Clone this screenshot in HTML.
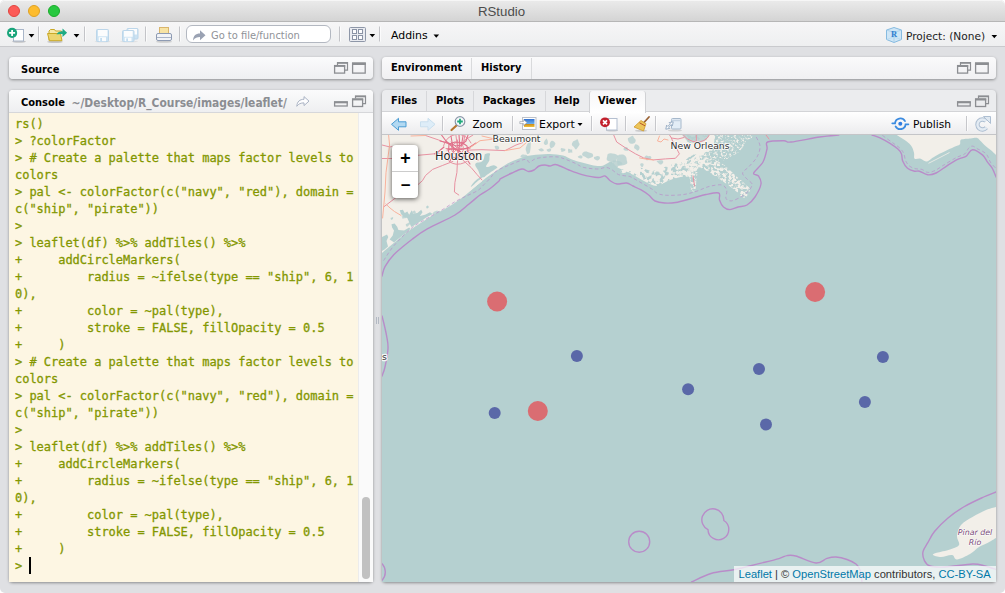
<!DOCTYPE html>
<html>
<head>
<meta charset="utf-8">
<title>RStudio</title>
<style>
html,body{margin:0;padding:0;}
html{background:#fff;}
body{width:1005px;height:593px;overflow:hidden;position:relative;border-radius:5px;background:#dfe0e3;font-family:"DejaVu Sans","Liberation Sans",sans-serif;font-size:11px;color:#000;}
.abs{position:absolute;}
#titlebar{left:0;top:0;width:1005px;height:22px;background:linear-gradient(#ebebeb,#d4d4d4);border-bottom:1px solid #b6b6b6;box-sizing:border-box;border-radius:5px 5px 0 0;box-shadow:inset 0 1px 0 #f6f6f6;}
#title{left:0;width:1003px;top:3.600px;text-align:center;font-family:"Liberation Sans",sans-serif;font-size:13.250px;color:#4c4c4c;line-height:16px;}
.tl{width:12px;height:12px;border-radius:50%;top:5px;box-sizing:border-box;}
#toolbar{left:0;top:22px;width:1005px;height:25px;background:linear-gradient(#f6f6f7,#eeeff0);border-bottom:1px solid #c9cacd;box-sizing:border-box;}
.sep{width:1px;background:#c8c9cc;top:27px;height:16px;}
.panel{background:#fff;box-sizing:border-box;border-radius:4px;box-shadow:0 1px 3px rgba(0,0,0,0.38);}
.hdr{background:linear-gradient(#fbfbfc,#eeeff1);}
.ui{font-family:"DejaVu Sans Condensed","DejaVu Sans","Liberation Sans",sans-serif;font-size:11px;line-height:14px;white-space:nowrap;}
.b{font-weight:bold;}
#console{left:9px;top:113px;width:349px;height:469px;background:#fdf6e3;}
#ctext{left:15px;top:116px;margin:0;font-family:"DejaVu Sans Mono","Liberation Mono",monospace;font-size:12px;line-height:17px;color:#839700;white-space:pre;letter-spacing:-0.024px;-webkit-text-stroke:0.3px #839700;}
</style>
</head>
<body>
<!-- title bar -->
<div id="titlebar" class="abs"></div>
<div class="abs tl" style="left:8px;background:#fc5b57;border:1px solid #e0443e;"></div>
<div class="abs tl" style="left:28px;background:#fdbc2e;border:1px solid #dea123;"></div>
<div class="abs tl" style="left:48px;background:#28c840;border:1px solid #1aab29;"></div>
<div id="title" class="abs">RStudio</div>

<!-- main toolbar -->
<div id="toolbar" class="abs"></div>
<div class="abs" style="left:186px;top:25px;width:145px;height:18px;box-sizing:border-box;border:1px solid #b3b8c1;border-radius:6px;background:#fff;"></div>
<div class="abs ui" style="left:211px;top:29px;color:#8f9298;">Go to file/function</div>
<div class="abs ui" style="left:391px;top:29px;font-family:'DejaVu Sans',sans-serif;font-size:10.900px;">Addins</div>
<div class="abs ui" style="left:906px;top:29px;font-family:'DejaVu Sans',sans-serif;font-size:10.600px;color:#222;">Project: (None)</div>
<svg class="abs" style="left:0;top:22px" width="1005" height="25" viewBox="0 22 1005 25">
<g stroke="#c3c4c8" stroke-width="1">
<path d="M38.5,26.5v15M84.5,26.5v15M145.5,26.5v15M179.5,26.5v15M339.5,26.5v15M379.5,26.5v15"/>
</g>
<g stroke="#fff" stroke-opacity="0.7" stroke-width="1">
<path d="M39.5,26.5v15M85.5,26.5v15M146.5,26.5v15M180.5,26.5v15M340.5,26.5v15M380.5,26.5v15"/>
</g>
<!-- new file -->
<ellipse cx="19" cy="41.6" rx="7" ry="1.2" fill="#000" opacity="0.18"/>
<rect x="13.5" y="29.5" width="10" height="11.5" fill="#fff" stroke="#a9b6c9" stroke-width="1"/>
<circle cx="12.1" cy="32.9" r="5.1" fill="#1aa57b"/>
<path d="M12.1,29.9v6M9.1,32.9h6" stroke="#fff" stroke-width="1.8"/>
<path d="M28.6,34l5.8,0l-2.9,3.4z" fill="#000"/>
<!-- open folder -->
<ellipse cx="55" cy="41.8" rx="8" ry="1.2" fill="#000" opacity="0.18"/>
<path d="M49,40.5l0,-9.5l1.5,-1.5l4,0l1,1.5l6,0l0,2" fill="#f7e9a8" stroke="#c9a928" stroke-width="1"/>
<path d="M47.5,33.5l13,0l1.5,7.2l-12.5,0z" fill="#ecd56f" stroke="#c9a928" stroke-width="1" stroke-linejoin="round"/>
<path d="M56.5,34.5c1,-2.5 3,-3.2 6,-3.2l0,-2.8l4.6,4.2l-4.6,4.2l0,-2.8c-2.5,0 -4.5,0.4 -6,0.4z" fill="#1eab84"/>
<path d="M73.6,34l5.8,0l-2.9,3.4z" fill="#000"/>
<!-- save (disabled) -->
<ellipse cx="102.500" cy="41.600" rx="8" ry="1" fill="#000" opacity="0.060"/>
<ellipse cx="129" cy="41.600" rx="9" ry="1" fill="#000" opacity="0.060"/>
<g>
<rect x="96.500" y="29.500" width="12" height="12" rx="1" fill="#cbe2f2" stroke="#bcd6ea"/>
<rect x="98" y="30" width="9.500" height="6.300" fill="#fbfcfd"/>
<rect x="98.700" y="37.200" width="7.300" height="4" fill="#fbfcfd"/>
<rect x="100.200" y="38" width="1.800" height="3.200" fill="#c3ddf0"/>
<rect x="127" y="28.500" width="11" height="10.500" rx="1" fill="#cbe2f2" stroke="#bcd6ea"/>
<rect x="128.500" y="29" width="8.500" height="5.500" fill="#fbfcfd"/>
<rect x="122.500" y="30.500" width="11.500" height="11" rx="1" fill="#cbe2f2" stroke="#bcd6ea"/>
<rect x="124" y="31" width="8.700" height="5.800" fill="#fbfcfd"/>
<rect x="124.700" y="37.600" width="6.800" height="3.600" fill="#fbfcfd"/>
<rect x="126.200" y="38.400" width="1.800" height="2.800" fill="#c3ddf0"/>
</g>
<!-- printer -->
<ellipse cx="164" cy="41.800" rx="8" ry="1" fill="#000" opacity="0.15"/>
<rect x="159.500" y="27.500" width="9" height="7" fill="#f7e3a4" stroke="#d9b56c"/>
<rect x="156.500" y="33.500" width="15" height="7" rx="1.500" fill="#f1f3f7" stroke="#8e9bb3"/>
<path d="M157,37.500h14" stroke="#aab4c7"/>
<!-- goto arrow -->
<path d="M193,40.500c0.300,-4.500 2.500,-7 7,-7l0,-3.300l5.500,5l-5.500,5l0,-3.300c-3,0 -5,0.800 -7,3.600z" fill="#9aa2b3"/>
<!-- grid -->
<rect x="349.500" y="27.500" width="16" height="14" rx="1" fill="#e9ebf0" stroke="#8e97a8"/>
<g fill="#fdfdfe" stroke="#8a93a5" stroke-width="1"><rect x="352.500" y="29.500" width="4" height="4"/><rect x="358.500" y="29.500" width="4" height="4"/><rect x="352.500" y="35.500" width="4" height="4"/><rect x="358.500" y="35.500" width="4" height="4"/></g>
<path d="M369.500,34l5.600,0l-2.800,3.300z" fill="#000"/>
<path d="M433.500,34.500l5.600,0l-2.800,3.300z" fill="#000"/>
<!-- project -->
<path d="M886.500,30l7.500,-2.500l7.500,2.500l0,9.500l-7.500,3l-7.500,-3z" fill="#cfe6f6" stroke="#86bbe0" stroke-width="1" stroke-linejoin="round"/>
<path d="M886.500,30l7.500,2.500l7.500,-2.500M894,32.500v10" fill="none" stroke="#a3cdea" stroke-width="0.800"/>
<path d="M886.500,39.500l7.500,-2.500l7.500,2.500" fill="none" stroke="#b5d8ef" stroke-width="0.700"/>
<text x="891" y="37.300" font-family="Liberation Serif, serif" font-weight="bold" font-size="8.500" fill="#2f7fd0">R</text>
<path d="M991.500,35l5.600,0l-2.800,3.300z" fill="#000"/>
</svg>

<!-- Source panel -->
<div class="abs panel hdr" style="left:9px;top:57px;width:364px;height:22px;"></div>
<div class="abs ui b" style="left:21px;top:63px;">Source</div>
<svg class="abs" style="left:330px;top:60px" width="40" height="16" viewBox="330 60 40 16" fill="none" stroke="#8c8e92" stroke-width="1.300">
<path d="M337.500,65v-2.300h10v7.500h-2.500" stroke-width="1.200"/><path d="M337,63h11" stroke-width="1.600"/>
<rect x="334.600" y="65.600" width="10" height="7.500"/><path d="M334,66h11.200" stroke-width="1.800"/>
<rect x="352.600" y="63.100" width="12.600" height="10"/><path d="M352,63.800h13.800" stroke-width="2.400"/>
</svg>

<!-- Console panel -->
<div class="abs panel" style="left:9px;top:90px;width:364px;height:492px;"></div>
<div class="abs hdr" style="left:9px;top:90px;width:364px;height:23px;border-radius:4px 4px 0 0;border-bottom:1px solid #d6d7da;box-sizing:border-box;"></div>
<div class="abs ui b" style="left:21px;top:96px;">Console</div>
<div class="abs ui b" style="left:71.500px;top:96px;color:#8b8d92;font-size:11.900px;">~/Desktop/R_Course/images/leaflet/</div>
<svg class="abs" style="left:296px;top:93px" width="76" height="16" viewBox="296 93 76 16" fill="none" stroke="#8c8e92" stroke-width="1.300">
<path d="M296.800,106.300c0.300,-4.700 3,-7 7.200,-7l0,-2.700l5,4.500l-5,4.500l0,-2.700c-3.200,0 -5.400,0.800 -7.200,3.400z" fill="#fdfdfe" stroke="#aab3c4" stroke-width="1" stroke-linejoin="round"/>
<rect x="334.600" y="102" width="12.600" height="4" fill="none"/><path d="M334,102.300h13.800" stroke-width="2"/>
<path d="M355.500,98.500v-2.300h10v7.500h-2.500" stroke-width="1.200"/><path d="M355,96.500h11" stroke-width="1.600"/>
<rect x="352.600" y="99" width="10" height="7.500"/><path d="M352,99.500h11.200" stroke-width="1.800"/>
</svg>
<div id="console" class="abs"></div>
<pre id="ctext" class="abs">rs()
&gt; ?colorFactor
&gt; # Create a palette that maps factor levels to
colors
&gt; pal &lt;- colorFactor(c("navy", "red"), domain =
c("ship", "pirate"))
&gt;
&gt; leaflet(df) %&gt;% addTiles() %&gt;%
+     addCircleMarkers(
+         radius = ~ifelse(type == "ship", 6, 1
0),
+         color = ~pal(type),
+         stroke = FALSE, fillOpacity = 0.5
+     )
&gt; # Create a palette that maps factor levels to
colors
&gt; pal &lt;- colorFactor(c("navy", "red"), domain =
c("ship", "pirate"))
&gt;
&gt; leaflet(df) %&gt;% addTiles() %&gt;%
+     addCircleMarkers(
+         radius = ~ifelse(type == "ship", 6, 1
0),
+         color = ~pal(type),
+         stroke = FALSE, fillOpacity = 0.5
+     )
&gt; </pre>
<div class="abs" style="left:29px;top:557px;width:2px;height:17px;background:#000;"></div>
<!-- scrollbar -->
<div class="abs" style="left:358px;top:113px;width:15px;height:469px;background:#fafafa;border-left:1px solid #ececec;box-sizing:border-box;"></div>
<div class="abs" style="left:362px;top:497px;width:8px;height:82px;border-radius:4px;background:#c1c1c1;"></div>

<div class="abs" style="left:376px;top:317px;width:1px;height:7px;background:#b3b9c3;"></div><div class="abs" style="left:378px;top:317px;width:1px;height:7px;background:#b3b9c3;"></div>
<!-- Environment panel -->
<div class="abs panel" style="left:382px;top:57px;width:614px;height:22px;background:linear-gradient(#fafafb,#f0f0f2);"></div>
<div class="abs" style="left:471px;top:58px;width:1px;height:21px;background:#d9dadc;"></div>
<div class="abs" style="left:531px;top:58px;width:1px;height:21px;background:#d9dadc;"></div>
<div class="abs ui b" style="left:391px;top:61px;">Environment</div>
<div class="abs ui b" style="left:481px;top:61px;">History</div>
<svg class="abs" style="left:953px;top:60px" width="40" height="16" viewBox="953 60 40 16" fill="none" stroke="#8c8e92" stroke-width="1.300">
<path d="M960.500,65v-2.300h10v7.500h-2.500" stroke-width="1.200"/><path d="M960,63h11" stroke-width="1.600"/>
<rect x="957.600" y="65.600" width="10" height="7.500"/><path d="M957,66h11.200" stroke-width="1.800"/>
<rect x="975.600" y="63.100" width="12.600" height="10"/><path d="M975,63.800h13.800" stroke-width="2.400"/>
</svg>

<!-- Viewer panel -->
<div class="abs panel" style="left:382px;top:90px;width:614px;height:492px;background:#ebecee;"></div>
<div class="abs" style="left:426px;top:91px;width:1px;height:20px;background:#d6d7da;"></div>
<div class="abs" style="left:473px;top:91px;width:1px;height:20px;background:#d6d7da;"></div>
<div class="abs" style="left:545px;top:91px;width:1px;height:20px;background:#d6d7da;"></div>
<div class="abs ui b" style="left:391px;top:94px;">Files</div>
<div class="abs ui b" style="left:436px;top:94px;">Plots</div>
<div class="abs ui b" style="left:483px;top:94px;">Packages</div>
<div class="abs ui b" style="left:554px;top:94px;">Help</div>
<svg class="abs" style="left:953px;top:93px" width="40" height="16" viewBox="953 93 40 16" fill="none" stroke="#8c8e92" stroke-width="1.300">
<rect x="957.600" y="102" width="12.600" height="4" fill="none"/><path d="M957,102.300h13.800" stroke-width="2"/>
<path d="M978.500,98.500v-2.300h10v7.500h-2.500" stroke-width="1.200"/><path d="M978,96.500h11" stroke-width="1.600"/>
<rect x="975.600" y="99" width="10" height="7.500"/><path d="M975,99.500h11.200" stroke-width="1.800"/>
</svg>
<div class="abs" style="left:382px;top:111px;width:614px;height:24px;background:linear-gradient(#ffffff,#ececee);border-top:1px solid #d3d4d7;border-bottom:1px solid #c4c5c8;box-sizing:border-box;"></div>
<div class="abs" style="left:589px;top:91px;width:57px;height:22px;background:linear-gradient(#f7f7f8,#ffffff);border-left:1px solid #d0d1d4;border-right:1px solid #d0d1d4;border-radius:3px 3px 0 0;box-sizing:border-box;"></div>
<div class="abs ui b" style="left:598px;top:94px;">Viewer</div>
<div class="abs ui" style="left:472.500px;top:117.300px;font-family:'DejaVu Sans',sans-serif;font-size:10.400px;">Zoom</div>
<div class="abs ui" style="left:539px;top:118px;font-family:'DejaVu Sans',sans-serif;font-size:10.900px;">Export</div>
<div class="abs ui" style="left:913px;top:118px;font-family:'DejaVu Sans',sans-serif;font-size:10.650px;">Publish</div>
<svg class="abs" style="left:382px;top:112px" width="614" height="22" viewBox="382 112 614 22">
<g stroke="#c6c7cb" stroke-width="1"><path d="M442.500,116v15M512.500,116v15M591.500,116v15M625.500,116v15M655.500,116v15M966.500,116v15"/></g><g stroke="#fff" stroke-opacity="0.700" stroke-width="1"><path d="M443.500,116v15M513.500,116v15M592.500,116v15M626.500,116v15M656.500,116v15M967.500,116v15"/></g>
<!-- back arrow -->
<path d="M391.500,124.300l7,-6l0,3.500l7.500,0l0,5l-7.500,0l0,3.500z" fill="#b2d9f2" stroke="#4a9cd3" stroke-width="1" stroke-linejoin="round"/>
<path d="M435,124.300l-7,-6l0,3.500l-7.500,0l0,5l7.500,0l0,3.500z" fill="#deedf8" stroke="#c9dfee" stroke-width="1" stroke-linejoin="round"/>
<!-- zoom -->
<path d="M456.500,125.500l-5,4.500" stroke="#b5752e" stroke-width="2.200" stroke-linecap="round"/>
<circle cx="460" cy="121.500" r="4.800" fill="#f3f8fb" stroke="#8a97a8" stroke-width="1.200"/>
<path d="M460,118.700v5.600M457.200,121.500h5.600" stroke="#1fa97a" stroke-width="1.800"/>
<!-- export -->
<defs><linearGradient id="sky" x1="0" y1="0" x2="0" y2="1"><stop offset="0" stop-color="#2f6fd0"/><stop offset="0.600" stop-color="#6fb2ee"/><stop offset="0.640" stop-color="#c98a1c"/><stop offset="1" stop-color="#f0c23c"/></linearGradient></defs>
<rect x="522.500" y="117.500" width="13.500" height="12" fill="#fff" stroke="#bcc1ca" stroke-width="1"/>
<rect x="524" y="119" width="10.500" height="8" fill="url(#sky)"/>
<path d="M519.800,121.600l3.800,0l0,-1.900l3.600,2.900l-3.600,2.900l0,-1.900l-3.800,0z" fill="#fff" stroke="#7d8590" stroke-width="0.500"/>
<path d="M577.500,123l5,0l-2.500,3z" fill="#000"/>
<!-- remove -->
<ellipse cx="612" cy="130.500" rx="6" ry="1" fill="#000" opacity="0.15"/><rect x="606.500" y="118.500" width="10.500" height="11.500" fill="#fff" stroke="#b4bfd0"/>
<circle cx="605" cy="122.300" r="4.900" fill="#c2202c"/>
<path d="M603,120.300l4,4M607,120.300l-4,4" stroke="#fff" stroke-width="1.700"/>
<!-- broom -->
<path d="M649,117l-5.500,6" stroke="#9a6234" stroke-width="1.800" stroke-linecap="round"/>
<ellipse cx="641" cy="130.800" rx="6" ry="1" fill="#000" opacity="0.15"/><path d="M641,120.500l5,3.200l-2.500,7.300l-9.500,-4z" fill="#edc55a" stroke="#cf9b2c" stroke-width="0.800" stroke-linejoin="round"/><path d="M639.500,122.800l5.500,3" stroke="#b5552a" stroke-width="1"/>
<!-- popout -->
<ellipse cx="675" cy="130.500" rx="7" ry="1" fill="#000" opacity="0.12"/>
<rect x="671.500" y="118.500" width="9.500" height="10.500" rx="1" fill="#e3edf6" stroke="#a6b8cb"/>
<path d="M671.500,120.500h9.500" stroke="#c4d3e2" stroke-width="1.500"/>
<path d="M665.800,129.200l0.800,-4l1.200,1.200l2.600,-2.600l-1.200,-1.200l4,-0.800l-0.800,4l-1.200,-1.200l-2.600,2.600l1.200,1.200z" fill="#fff" stroke="#8fa6c0" stroke-width="0.900" stroke-linejoin="round"/>
<!-- publish -->
<g fill="none" stroke="#3b8be0" stroke-width="1.800" stroke-linecap="round">
<path d="M892.300,123.300 L895,123.300 A5.400,5.400 0 0 1 905,121.100"/>
<path d="M908.400,124.300 L905.600,124.300 A5.400,5.400 0 0 1 895.600,126.500"/>
</g>
<circle cx="900.300" cy="123.800" r="2" fill="#2f7de1"/>
<!-- refresh -->
<path d="M986.300,127.700 A5,5 0 1 1 986,121" fill="none" stroke="#aebfd2" stroke-width="4.400"/>
<path d="M983.500,116.500l7,0l0,7z" fill="#dfe8f1" stroke="#aebfd2" stroke-width="1" stroke-linejoin="round"/>
<path d="M986.300,127.700 A5,5 0 1 1 986,121" fill="none" stroke="#e3ebf3" stroke-width="2.400"/>
</svg>
<svg id="mapsvg" class="abs" style="left:382px;top:135px;" width="614" height="447" viewBox="382 135 614 447">
<rect x="382" y="135" width="614" height="447" fill="#b5d0d0"/>
<defs>
<filter id="marsh" x="0" y="0" width="100%" height="100%" filterUnits="objectBoundingBox">
<feTurbulence type="fractalNoise" baseFrequency="0.22 0.25" numOctaves="3" seed="4" result="n"/>
<feColorMatrix in="n" type="matrix" values="0 0 0 0 0  0 0 0 0 0  0 0 0 0 0  0 0 0 7 -2.65" result="m"/>
<feComposite in="SourceGraphic" in2="m" operator="in"/>
</filter>
<filter id="marshB" x="0" y="0" width="100%" height="100%" filterUnits="objectBoundingBox">
<feTurbulence type="fractalNoise" baseFrequency="0.38 0.42" numOctaves="2" seed="9" result="n"/>
<feColorMatrix in="n" type="matrix" values="0 0 0 0 0  0 0 0 0 0  0 0 0 0 0  0 0 0 5 -2.45" result="m"/>
<feComposite in="SourceGraphic" in2="m" operator="in"/>
</filter>
<filter id="marshC" x="0" y="0" width="100%" height="100%" filterUnits="objectBoundingBox">
<feTurbulence type="fractalNoise" baseFrequency="0.34 0.38" numOctaves="2" seed="21" result="n"/>
<feColorMatrix in="n" type="matrix" values="0 0 0 0 0  0 0 0 0 0  0 0 0 0 0  0 0 0 6 -2.55" result="m"/>
<feComposite in="SourceGraphic" in2="m" operator="in"/>
</filter>
</defs>
<path fill="#f2efe9" d="M382,135 L640,135 L640,176 C638.2,175.2 633.1,172.3 629.5,171 C625.9,169.7 621.4,169.5 618.5,168 C615.6,166.5 613.9,162.8 612,162 C610.1,161.2 608.8,162.7 607,163.4 C605.2,164.1 603.6,165.7 601,166 C598.4,166.3 594.7,165.6 591.5,165 C588.3,164.4 585.2,163.5 582,162.6 C578.8,161.7 575.2,160.7 572,159.5 C568.8,158.3 566.7,156.4 563,155.5 C559.3,154.6 553.8,154.2 550,154 C546.2,153.8 543,154.2 540,154.4 C537,154.6 534.5,154.9 532,155.3 C529.5,155.7 528,155.8 524.9,156.7 C521.8,157.6 516.5,159.4 513.4,160.7 C510.2,162 508.3,163.2 506,164.5 C503.7,165.8 501.9,167.2 499.6,168.7 C497.4,170.1 494.8,171.7 492.5,173.2 C490.2,174.7 488.2,176.1 485.9,177.9 C483.6,179.7 480.8,182.1 478.5,184 C476.2,185.9 475,187 472,189.5 C469,192 464.2,196.2 460.4,199 C456.6,201.8 452.2,204.5 449,206.5 C445.8,208.5 443.7,209.5 441,211 C438.3,212.5 435.9,213.5 432.6,215.4 C429.3,217.3 424.6,220.4 421,222.7 C417.4,225 414.3,226.9 411,229.3 C407.7,231.7 404.2,234.4 401,237 C397.8,239.6 394.8,242.3 392,244.6 C389.2,246.9 386.2,249.4 384.5,250.8 C382.8,252.2 382.4,252.6 382,253 Z"/>
<path filter="url(#marsh)" fill="#f2efe9" d="M620,135 C634.3,129.2 691.7,131.2 706,135 C720.3,138.8 706.8,152.8 706,158 C705.2,163.2 702.7,164 701,166 C699.3,168 697.8,168.3 696,170 C694.2,171.7 692.6,174.8 690,176 C687.4,177.2 684.2,176.2 680.5,177 C676.8,177.8 671.7,179.5 667.7,181 C663.7,182.5 660.6,186 656.6,186 C652.6,186 648.5,183.2 644,181 C639.5,178.8 633.5,174.8 629.5,173 C625.5,171.2 621.6,176.3 620,170 C618.4,163.7 605.7,140.8 620,135Z"/>
<path filter="url(#marshB)" fill="#f2efe9" d="M706,135 C713.7,132.2 745.3,134 752,135 C758.7,136 747.8,138.5 746,141 C744.2,143.5 743.5,147.3 741,150 C738.5,152.7 734.3,155.2 731,157 C727.7,158.8 724.2,160.7 721,161 C717.8,161.3 714.5,160.5 712,159 C709.5,157.5 707,156 706,152 C705,148 698.3,137.8 706,135Z"/>
<path filter="url(#marshC)" fill="#f2efe9" d="M699,157 C701.2,155.8 707.8,157.7 712,159 C716.2,160.3 720.2,162.3 724,165 C727.8,167.7 731.7,172 735,175 C738.3,178 741.5,180.5 744,183 C746.5,185.5 750,187.5 750,190 C750,192.5 746.2,197.7 744,198 C741.8,198.3 739.7,194.2 737,192 C734.3,189.8 731.2,187.3 728,185 C724.8,182.7 721.5,180.3 718,178 C714.5,175.7 710.2,173 707,171 C703.8,169 700.3,168.3 699,166 C697.7,163.7 696.8,158.2 699,157Z"/>
<path filter="url(#marshC)" fill="#f2efe9" d="M687,164 C689,163.3 695.4,164.3 697,167 C698.6,169.7 696.8,176 696.5,180 C696.2,184 695.9,189.3 695,191 C694.1,192.7 691.8,192 691,190 C690.2,188 691,182.2 690,179 C689,175.8 685.5,173.5 685,171 C684.5,168.5 685,164.7 687,164Z"/>
<path fill="#f2efe9" d="M620,135 C630.3,130.5 670.7,133.8 682,135 C693.3,136.2 685.3,140.6 688,142 C690.7,143.4 695,143.8 698,143.5 C701,143.2 704.2,141.4 706,140 C707.8,138.6 707.7,135.8 709,135 C710.3,134.2 713.3,133.2 714,135 C714.7,136.8 714.7,143 713,146 C711.3,149 707.5,151.5 704,153 C700.5,154.5 695.3,153.7 692,155 C688.7,156.3 687.3,159.5 684,161 C680.7,162.5 676,162.7 672,164 C668,165.3 664,168 660,169 C656,170 652.3,170.7 648,170 C643.7,169.3 638.7,166.3 634,165 C629.3,163.7 622.3,167 620,162 C617.7,157 609.7,139.5 620,135Z"/>
<path fill="#f2efe9" d="M896.7,135 C897.9,135.8 901.5,137.8 903.9,139.6 C906.3,141.3 909.3,143.3 911,145.5 C912.7,147.7 913.4,150.5 914,152.7 C914.6,154.9 913.5,157.7 914.6,158.7 C915.7,159.7 918.6,158.2 920.6,158.7 C922.6,159.2 924.8,161.6 926.6,161.6 C928.4,161.6 929.5,159.8 931.3,158.7 C933.1,157.6 934.7,156.4 937.3,155 C939.9,153.6 943.7,151.8 946.9,150.3 C950.1,148.8 954.2,147.1 956.4,146.1 C958.6,145.1 959.2,145.4 960,144.3 C960.8,143.2 959.4,140.6 961.2,139.6 C963,138.6 968.1,138.7 970.7,138.4 C973.3,138.1 975.1,137.4 976.7,137.8 C978.3,138.2 978.9,139.4 980.3,140.7 C981.7,142 983.2,143.9 985,145.5 C986.8,147.1 989.2,148.7 991,150.3 C992.8,151.9 995.2,154.2 996,155 L996,135 Z"/>
<path fill="#f2efe9" d="M996,507 C994.3,507.5 989.9,508.3 986,510 C982.1,511.7 976.7,514.5 972.5,517 C968.3,519.5 963.6,521.8 961,525 C958.4,528.2 957.3,532.7 957,536 C956.7,539.3 960.2,542.8 959,545 C957.8,547.2 953.7,548.1 950,549.4 C946.3,550.7 939.5,551.9 936.7,552.8 C933.9,553.7 932.3,554.3 933,555 C933.7,555.7 937.8,557 941,557 C944.2,557 949.3,554.6 952,555 C954.7,555.4 954,559.7 957,559.5 C960,559.3 966.3,556.1 970,554 C973.7,551.9 976,548.9 979,547 C982,545.1 985.2,544.2 988,542.7 C990.8,541.2 994.7,538.8 996,538 Z"/>
<g fill="#b5d0d0" fill-opacity="0.8">
<path fill-opacity="1" d="M485.3,153.9 C486.2,153.5 489.2,153 489.9,153.5 C490.6,154 489.6,155.5 489.5,156.8 C489.4,158.1 489.7,159.6 489.1,161.1 C488.5,162.6 486.3,165.1 486.1,166.1 C485.9,167.1 486.5,167.1 487.8,167 C489.1,166.9 492.1,165.3 493.7,165.3 C495.2,165.3 496.7,166.5 497.1,167 C497.5,167.5 497.9,167.1 496.2,168.4 C494.5,169.7 489,173.3 487,174.7 C485,176.1 485.1,176.5 484.4,176.9 C483.7,177.3 483.2,177 482.7,177.3 C482.1,177.6 482.1,177.8 481.1,178.6 C480.1,179.4 478.5,180.5 476.8,181.9 C475.1,183.3 471.7,186.7 471,187 C470.3,187.3 471.6,185 472.6,183.8 C473.6,182.6 475.5,180.7 476.8,179.6 C478.1,178.5 479.8,178.1 480.2,177.1 C480.6,176.1 479.8,174.8 479.4,173.7 C479,172.6 478.7,171.4 478.1,170.3 C477.5,169.2 476.5,168 476,167 C475.5,166 475.1,165.1 475.2,164.4 C475.3,163.7 475.8,163.1 476.8,162.7 C477.8,162.3 480,162.4 481.1,161.9 C482.2,161.4 483.1,160.4 483.6,159.4 C484.2,158.4 484.1,156.9 484.4,156 C484.7,155.1 484.4,154.3 485.3,153.9Z"/>
<path d="M682,135 L709,135 L706,140 L698,143.5 L688,142 Z"/>
<path d="M530.5,148.5 C530.3,149.7 530.2,151.8 529.7,152.7 C529.2,153.6 528,154.3 527.4,154.1 C526.8,154 526.6,152.5 526.4,151.7 C526.1,150.9 525.6,150.2 525.7,149.2 C525.7,148.2 526.2,146.7 526.7,145.6 C527.1,144.5 527.8,143.2 528.5,142.6 C529.1,142 530.3,141.5 530.6,142.1 C531,142.6 530.7,144.7 530.7,145.8 C530.7,146.8 530.7,147.4 530.5,148.5Z"/>
<path d="M527.8,156.5 C527.8,157 527.4,157.9 526.9,158.1 C526.3,158.4 525.1,158 524.4,158 C523.7,157.9 523.5,157.9 522.8,157.8 C522.2,157.7 521,157.7 520.7,157.3 C520.3,157 520.5,156.2 520.8,155.7 C521.1,155.3 521.7,154.8 522.4,154.6 C523,154.4 523.8,154.7 524.5,154.7 C525.1,154.8 525.9,154.8 526.4,155.1 C527,155.4 527.7,156 527.8,156.5Z"/>
<path d="M547.9,142 C547.9,142.6 548,143.5 547.7,144 C547.5,144.4 546.8,144.6 546.4,144.7 C545.9,144.9 545.3,145 544.8,144.7 C544.4,144.5 543.9,143.7 543.8,143.1 C543.7,142.5 544.2,141.7 544.4,141.2 C544.7,140.7 544.9,140.6 545.2,140.1 C545.5,139.7 546.1,138.5 546.5,138.5 C546.8,138.5 547.2,139.7 547.5,140.3 C547.7,140.9 547.8,141.4 547.9,142Z"/>
<path d="M554.4,145.9 C554,146.5 553.6,146.9 553.1,147.3 C552.6,147.6 551.9,148.3 551.4,148.2 C550.8,148.2 550.3,147.4 550,146.9 C549.7,146.4 549.7,145.8 549.7,145.1 C549.7,144.5 549.6,143.7 549.9,143 C550.2,142.3 550.9,141.1 551.5,140.9 C552.2,140.6 553.3,141 553.9,141.4 C554.6,141.9 555.3,142.7 555.4,143.5 C555.4,144.2 554.8,145.2 554.4,145.9Z"/>
<path d="M551.1,150 C551.1,150.4 551,150.8 550.7,151.1 C550.5,151.4 549.9,151.6 549.4,151.7 C548.9,151.8 548.2,151.8 547.8,151.6 C547.3,151.4 547,151 546.9,150.6 C546.7,150.2 546.4,149.6 546.7,149.4 C546.9,149.1 547.8,149.2 548.3,149 C548.7,148.9 548.9,148.6 549.3,148.6 C549.8,148.5 550.6,148.6 550.9,148.8 C551.2,149 551.2,149.6 551.1,150Z"/>
<path d="M543.9,150 C544,150.3 543.7,150.9 543.3,151.1 C542.8,151.4 542,151.5 541.4,151.5 C540.9,151.5 540.3,151.3 539.9,151.1 C539.6,150.9 539.6,150.7 539.3,150.4 C539.1,150.1 538.4,149.7 538.4,149.4 C538.5,149.2 539.3,148.9 539.8,148.7 C540.3,148.5 541,148.2 541.5,148.3 C542,148.4 542.4,148.8 542.8,149.1 C543.2,149.4 543.8,149.7 543.9,150Z"/>
<path d="M579.6,144.6 C579.4,145.4 578.6,146.2 578,147 C577.4,147.8 576.5,149.4 575.8,149.4 C575.1,149.4 574.6,147.7 573.9,147 C573.3,146.3 572.1,145.9 571.9,145.1 C571.7,144.2 572.3,142.6 572.9,141.8 C573.4,141.1 574.3,141 575.1,140.5 C575.9,140.1 577,139 577.5,139.3 C578.1,139.5 578.3,141.2 578.6,142 C579,142.9 579.7,143.8 579.6,144.6Z"/>
<path d="M572.1,151 C572.2,151.5 572.7,152.4 572.4,152.6 C572.1,152.9 571,152.5 570.3,152.6 C569.7,152.6 569,153.1 568.6,152.9 C568.2,152.8 568.3,151.9 568.2,151.5 C568.1,151.1 567.9,150.9 568,150.4 C568,150 568,149 568.4,148.8 C568.8,148.6 569.8,149.2 570.4,149.4 C571,149.5 571.8,149.3 572.1,149.6 C572.4,149.9 572.1,150.5 572.1,151Z"/>
<path d="M565.4,150 C565.4,150.4 565.1,150.8 564.8,151.1 C564.4,151.3 563.9,151.3 563.3,151.4 C562.8,151.5 561.8,152 561.5,151.9 C561.2,151.7 561.4,150.9 561.3,150.4 C561.2,150 560.6,149.8 560.6,149.4 C560.7,149 561,148.2 561.5,148.1 C561.9,148 562.7,148.5 563.3,148.6 C563.9,148.8 564.6,148.6 565,148.8 C565.3,149 565.5,149.6 565.4,150Z"/>
<path d="M593.1,155.9 C593,156.6 592.1,157.2 591.3,157.6 C590.5,158 589.3,158.5 588.3,158.4 C587.4,158.3 586.5,157.4 585.5,156.9 C584.5,156.4 582.8,156 582.3,155.3 C581.9,154.6 582.2,153.4 582.8,152.8 C583.3,152.1 584.8,151.6 585.8,151.6 C586.9,151.5 588.1,152.3 589.1,152.6 C590.2,153 591.5,153.1 592.2,153.6 C592.8,154.2 593.3,155.2 593.1,155.9Z"/>
<path d="M599.9,158 C599.9,158.5 599.8,158.9 599.4,159.3 C599,159.7 598.3,160.4 597.6,160.4 C597,160.5 596.1,160 595.5,159.7 C594.9,159.4 594.4,159.1 594.2,158.7 C593.9,158.3 593.8,157.6 594,157.3 C594.3,156.9 595.2,156.8 595.8,156.6 C596.3,156.4 596.9,156 597.5,156 C598.1,156 599.1,156.3 599.5,156.6 C599.9,157 599.9,157.5 599.9,158Z"/>
<path d="M582.5,157 C582.5,157.4 582.4,157.8 582.1,158 C581.8,158.3 581,158.6 580.5,158.6 C580,158.6 579.4,158.2 579,158 C578.6,157.8 578.5,157.6 578.3,157.4 C578.1,157.1 577.7,156.8 577.8,156.5 C577.9,156.3 578.5,156.1 578.9,155.9 C579.4,155.7 580,155.3 580.5,155.3 C581,155.3 581.8,155.6 582.1,155.9 C582.4,156.2 582.5,156.6 582.5,157Z"/>
<path d="M616.9,158.8 C616.5,159.8 616.6,161.2 615.7,161.7 C614.8,162.3 612.8,162.3 611.4,162 C610,161.7 607.7,161 607,160.2 C606.3,159.3 607,157.6 607.2,156.6 C607.4,155.6 607.3,154.7 607.9,154.1 C608.5,153.6 609.8,153.3 610.8,153.2 C611.8,153.2 612.9,153.4 614.1,153.8 C615.3,154.2 617.5,154.9 618,155.7 C618.5,156.5 617.3,157.8 616.9,158.8Z"/>
<path d="M626.7,160 C626.9,161.1 627.7,162.7 627.1,163.6 C626.5,164.5 624.6,165 623.1,165.3 C621.7,165.6 619.3,166 618.3,165.4 C617.3,164.8 617.3,162.6 617.1,161.5 C616.9,160.3 616.9,159.6 617.1,158.5 C617.4,157.5 617.6,155.7 618.6,155.1 C619.6,154.5 621.9,154.3 623.1,154.6 C624.4,155 625.5,156.2 626.1,157.1 C626.7,158 626.5,158.9 626.7,160Z"/>
<path d="M622.3,164 C622,164.6 619.7,164.8 618.8,165.4 C617.9,166 617.8,167.2 617,167.3 C616.2,167.5 615.1,166.4 614,166.1 C612.8,165.8 610.3,165.8 610,165.3 C609.8,164.8 612.1,164 612.6,163.3 C613.1,162.5 612.2,161.3 613,160.8 C613.7,160.4 615.7,160.6 617,160.7 C618.2,160.9 619.7,161.1 620.6,161.7 C621.5,162.2 622.6,163.4 622.3,164Z"/>
<path d="M635.7,140 C635.8,140.7 635.5,141.9 635,142.5 C634.5,143.2 633.5,143.6 632.7,143.8 C631.8,143.9 630.8,143.8 630.1,143.4 C629.4,143 628.8,142.1 628.4,141.3 C628.1,140.5 627.6,139.2 627.9,138.5 C628.2,137.8 629.5,137.5 630.3,137 C631.1,136.5 632.1,135.6 632.7,135.8 C633.4,136 633.7,137.4 634.2,138.1 C634.7,138.8 635.6,139.3 635.7,140Z"/>
<path d="M639.5,147 C639.7,147.6 639.6,148.6 639.2,149.3 C638.9,149.9 638.1,150.7 637.5,150.7 C637,150.7 636.4,149.7 635.9,149.3 C635.4,148.9 634.6,148.8 634.3,148.2 C634,147.6 634.2,146.5 634.4,145.9 C634.6,145.2 635.1,144.4 635.6,144.2 C636.1,144 636.9,144.5 637.3,144.7 C637.8,144.9 638,145.2 638.4,145.6 C638.8,146 639.4,146.4 639.5,147Z"/>
<path d="M628.1,149 C628.1,149.4 628.4,150.1 628.1,150.4 C627.8,150.7 626.9,150.8 626.4,150.8 C625.9,150.8 625.4,150.6 625,150.4 C624.5,150.3 623.9,150 623.7,149.7 C623.4,149.3 623.5,148.7 623.7,148.3 C623.8,147.9 624.3,147.5 624.8,147.3 C625.2,147.1 625.9,147 626.4,147.1 C626.9,147.2 627.4,147.6 627.7,147.9 C627.9,148.2 628,148.6 628.1,149Z"/>
<path d="M499.2,147.5 C499.3,148 499.1,148.8 498.8,149.1 C498.5,149.5 497.8,149.6 497.4,149.7 C496.9,149.7 496.3,149.7 496,149.4 C495.6,149.2 495.5,148.7 495.2,148.2 C495,147.7 494.5,146.9 494.6,146.5 C494.7,146.1 495.7,145.9 496.1,145.8 C496.6,145.7 496.9,145.7 497.3,145.8 C497.6,145.8 498,146 498.3,146.3 C498.6,146.6 499.1,147 499.2,147.5Z"/>
<path d="M439.9,211.2 C440.1,211.5 439.6,212.3 439.2,212.8 C438.7,213.3 438.1,213.9 437.4,214.3 C436.7,214.8 435.4,215.4 434.8,215.4 C434.1,215.5 434,214.9 433.6,214.6 C433.2,214.4 432.6,214.3 432.5,214 C432.5,213.6 432.8,212.9 433.3,212.4 C433.9,211.9 435.1,211.2 435.9,211 C436.7,210.7 437.4,210.8 438.1,210.9 C438.7,210.9 439.7,210.9 439.9,211.2Z"/>
<path d="M423.9,217.6 C424.1,217.9 424.8,218.2 424.6,218.6 C424.3,219 423.2,219.8 422.4,220.2 C421.6,220.6 420.5,221 419.8,221.1 C419.1,221.2 418.8,220.9 418.3,220.8 C417.8,220.6 416.8,220.6 416.8,220.3 C416.7,219.9 417.5,219 418.2,218.5 C418.9,218 420.1,217.6 421,217.3 C421.8,217 422.9,216.7 423.3,216.8 C423.8,216.8 423.7,217.3 423.9,217.6Z"/>
<path d="M411.3,222.6 C411.3,223 410.4,223.8 409.9,224.2 C409.5,224.6 409.3,224.8 408.8,225.2 C408.4,225.6 407.6,226.7 407.1,226.8 C406.7,226.9 406.4,226.3 406.2,226 C406,225.7 405.9,225.6 405.9,225.3 C405.8,225 405.6,224.5 405.9,224.2 C406.2,223.8 407.1,223.5 407.8,223.2 C408.4,222.8 409.3,222.2 409.9,222.2 C410.5,222.1 411.3,222.3 411.3,222.6Z"/>
<path d="M398.4,230 C398.7,230.2 398.7,230.9 398.6,231.4 C398.5,231.9 398,232.7 397.6,233 C397.1,233.4 396.4,233.2 395.9,233.4 C395.4,233.5 394.8,234.1 394.5,234 C394.1,233.9 394,233.4 394,233.1 C393.9,232.7 393.9,232.2 394.2,231.8 C394.4,231.4 395.1,231.1 395.5,230.9 C395.9,230.6 396.2,230.5 396.7,230.4 C397.2,230.2 398.1,229.8 398.4,230Z"/>
<path d="M406.5,217 C406.6,217.3 406.4,217.9 406,218.1 C405.6,218.4 404.9,218.1 404.3,218.2 C403.7,218.3 402.9,218.8 402.6,218.7 C402.3,218.5 402.4,217.8 402.3,217.4 C402.1,217.1 401.6,216.7 401.7,216.4 C401.9,216.2 402.7,216.2 403.2,216 C403.6,215.8 404.1,215.3 404.4,215.3 C404.8,215.3 405,215.9 405.4,216.2 C405.7,216.5 406.4,216.7 406.5,217Z"/>
<path d="M415.7,212 C415.8,212.3 415.9,212.7 415.7,213 C415.5,213.2 414.8,213.4 414.4,213.4 C414,213.4 413.6,213 413.2,212.9 C412.8,212.7 412.1,212.7 412,212.5 C411.8,212.3 412,211.8 412.2,211.6 C412.4,211.3 413,211.4 413.3,211.2 C413.7,211.1 414.1,210.5 414.4,210.5 C414.7,210.5 415,211.1 415.2,211.3 C415.4,211.6 415.6,211.7 415.7,212Z"/>
<path d="M651.4,158 C651.3,158.5 650.4,159 649.9,159.3 C649.4,159.7 649,159.9 648.4,160.1 C647.9,160.2 646.8,160.5 646.4,160.3 C646,160.1 646.2,159.2 645.9,158.6 C645.6,158.1 644.7,157.5 644.7,157 C644.8,156.5 645.7,155.7 646.3,155.5 C646.9,155.4 647.7,156.1 648.4,156.2 C649.1,156.3 650,155.9 650.5,156.2 C651,156.5 651.5,157.5 651.4,158Z"/>
<path d="M663.2,162 C663.2,162.5 663,163 662.6,163.4 C662.1,163.8 661.3,164.5 660.7,164.5 C660,164.5 659.2,163.8 658.8,163.4 C658.3,163.1 658.2,162.9 657.9,162.5 C657.5,162.1 656.5,161.5 656.7,161.2 C656.8,160.8 658,160.6 658.6,160.4 C659.3,160.3 659.8,160.2 660.5,160.2 C661.2,160.2 662.2,160.2 662.7,160.5 C663.2,160.8 663.3,161.5 663.2,162Z"/>
<path d="M643.6,165 C643.5,165.4 643.4,165.7 643.2,166 C643,166.4 642.7,167 642.4,167.1 C642,167.1 641.5,166.7 641.2,166.4 C640.9,166.2 640.7,165.9 640.5,165.5 C640.3,165.2 640.1,164.7 640.2,164.3 C640.2,164 640.7,163.5 641,163.3 C641.4,163.2 641.9,163.3 642.3,163.3 C642.7,163.4 643.2,163.5 643.4,163.8 C643.7,164.1 643.6,164.6 643.6,165Z"/>
<path fill-opacity="1" d="M411.3,227 L407.3,217.9 L403.5,216.7 L401,214.1 L399.7,210.3 L402.9,209.7 L404.8,212.9 L407.3,211.6 L409.2,214.8 L411.7,210.3 L413,213.5 L417.4,212.9 L421.2,209.7 L422.5,212.2 L419.9,216 L425,214.8 L430,212.2 L432.6,213.9 L425,218.3 L418.7,222.4 L412.3,226.5 Z"/>
<path fill-opacity="1" d="M410.4,229 L409.2,227.4 L404.1,230.6 L398.4,229.9 L397.2,226.8 L394.6,223.6 L391.5,224.2 L392.1,227.4 L394,230.6 L392.7,235.6 L389.6,239.4 L392,241 L394,242.6 L398.4,238.8 L404.8,233.7 Z"/>
<path fill-opacity="1" d="M382,236.9 L387,234.4 L388.3,236.9 L386.5,241 L388,246.5 L384.5,249.5 L382,251 Z"/>
<path fill-opacity="0.9" d="M428.7,207 C428.7,207.2 428.6,207.5 428.5,207.7 C428.3,207.9 428.1,208.2 427.8,208.3 C427.5,208.4 426.9,208.5 426.6,208.3 C426.4,208.2 426.3,207.7 426.3,207.4 C426.3,207.1 426.2,206.9 426.3,206.6 C426.4,206.4 426.6,206.2 426.8,206 C427.1,205.8 427.5,205.4 427.8,205.4 C428.1,205.5 428.3,206 428.5,206.3 C428.6,206.5 428.7,206.8 428.7,207Z"/>
<path fill-opacity="0.9" d="M393,218.5 C392.9,218.8 393,219 392.8,219.1 C392.7,219.3 392.5,219.4 392.2,219.6 C391.9,219.7 391.4,219.9 391.2,219.8 C391,219.7 390.9,219.2 390.8,218.9 C390.7,218.6 390.5,218.2 390.6,218 C390.7,217.8 391.2,217.8 391.5,217.7 C391.8,217.6 391.9,217.3 392.2,217.3 C392.5,217.3 393.1,217.4 393.2,217.6 C393.3,217.8 393.1,218.2 393,218.5Z"/>
</g>
<g fill="none" stroke="#f2efe9" stroke-width="1"><path d="M928.5,163.3 L938,158.5 L949.5,152.5" stroke-width="0.8"/><path d="M487.5,176 L497.5,169.5"/><path d="M470,190.5 L483,180"/></g>
<g fill="none" stroke="#b98cc9" stroke-opacity="0.75" stroke-width="0.9" stroke-dasharray="3.5 2.5">
<path d="M383.6,260.6 C385.4,258.1 389.4,250.9 394.2,245.4 C399,239.9 406.8,232.1 412.2,227.6 C417.6,223.1 421.8,221.5 426.6,218.7 C431.4,215.9 436.1,213.4 440.9,210.6 C445.7,207.8 450.8,204.1 455.2,201.6 C459.6,199.1 463.7,197.3 467.5,195.5 C471.3,193.7 475.1,192.3 477.8,190.5 C480.6,188.7 481.9,186.6 484,184.5 C486.1,182.4 488.7,180 490.5,177.9 C492.3,175.8 493.2,173.7 495,172.1 C496.8,170.5 498.7,169.6 501,168.5 C503.3,167.4 505.6,166.6 508.8,165.3 C512,164 517.3,161.7 520.3,160.7 C523.2,159.7 525,159 526.5,159.3 C528,159.6 527.9,162.5 529.4,162.4 C530.9,162.3 532.8,159.6 535.7,158.7 C538.6,157.8 543.2,157.3 546.9,157 C550.6,156.7 554.8,156.6 558,157 C561.2,157.4 563.1,158.4 566,159.5 C568.9,160.6 572.6,162.1 575.5,163.4 C578.4,164.7 579.8,166.5 583.5,167.4 C587.2,168.3 594.1,169 597.8,169 C601.5,169 603.4,167.3 605.8,167.4 C608.2,167.5 609.9,168.6 612,169.8 C614.1,171 616.1,173.6 618.5,174.6 C620.9,175.6 624.4,175.6 626.5,176 C628.6,176.4 628.6,175.9 631,177 C633.4,178.1 637.2,180.5 640.7,182.5 C644.2,184.5 648.9,187.1 651.8,189 C654.7,190.9 655.3,192.6 658,193.7 C660.7,194.8 663.5,195.2 667.8,195.3 C672.1,195.4 678.9,195.2 683.7,194.5 C688.5,193.8 692.2,192.6 696.4,191.3 C700.6,190 704.7,187.6 709,186.5 C713.3,185.4 719,184.3 722,185 C725,185.7 726,188.2 726.7,190.5 C727.4,192.8 725.2,196.8 726,198.5 C726.8,200.2 729,201.2 731.5,200.9 C734,200.6 738.1,198.6 741,196.9 C743.9,195.2 747.2,192.7 749,190.5 C750.8,188.3 752.3,185.8 752,184 C751.7,182.2 749,181.2 747.4,179.4 C745.8,177.6 742.3,175.1 742.6,173 C742.9,170.9 746.6,169.3 749,166.6 C751.4,163.9 755.2,160.4 757,157 C758.8,153.6 760.3,149.6 760,146 C759.7,142.4 756.2,137.3 755.4,135.6"/>
<path d="M882.4,135.4 C884.2,136.7 890.1,140.9 893.1,143.1 C896.1,145.3 898.5,146.7 900.3,148.5 C902.1,150.3 903,151.8 903.9,153.9 C904.8,156 904.7,158.9 905.7,161 C906.7,163.1 908.2,165.1 909.9,166.4 C911.6,167.7 913.8,168.3 915.8,168.8 C917.8,169.3 919.8,168.8 921.8,169.4 C923.8,170 925.6,172.2 927.8,172.4 C930,172.6 932.1,171.9 934.9,170.6 C937.7,169.3 940.9,166.8 944.5,164.6 C948.1,162.4 953,159.3 956.4,157.5 C959.8,155.7 962.8,155.4 964.8,153.9 C966.8,152.4 967.1,149.8 968.4,148.5 C969.7,147.2 970.9,146 972.5,146.1 C974.1,146.2 976,148.1 977.9,149.1 C979.8,150.1 982.3,151 983.9,152.1 C985.5,153.2 986.4,154 987.5,155.7 C988.6,157.4 989,160.1 990.4,162.2 C991.8,164.3 995.1,167.4 996,168.5"/>
</g>
<g id="purple" fill="none" stroke="#b98cc9" stroke-width="1.4" stroke-linejoin="round" stroke-linecap="round">
<path d="M382,276 C382.5,274.4 383,270.3 385,266.7 C387,263.1 389.4,259.1 394,254.5 C398.6,249.9 406.9,243.3 412.5,239 C418.1,234.7 420.6,232.7 427.7,228.7 C434.8,224.7 448.1,219.1 455,215 C461.9,210.9 464.8,207.3 469,204 C473.2,200.7 476.6,197.5 480,195 C483.4,192.5 486.3,191.3 489.5,189 C492.7,186.7 497.1,182.7 499,181 C500.9,179.3 498.5,179.9 500.7,178.6 C502.9,177.3 508.4,174.6 512,173 C515.5,171.4 519.3,169.3 522,169 C524.7,168.7 526,171.2 528,171.4 C530,171.6 532.2,170.9 534,170 C535.8,169.1 537.2,166.8 539,166 C540.8,165.2 543.2,165 545,165 C546.8,165 548.1,166.1 550,166 C551.9,165.9 553.2,164 556.4,164.7 C559.6,165.4 564.7,168.3 569,170 C573.3,171.7 577.2,173.3 582,174.6 C586.8,175.8 594.2,177.3 598,177.5 C601.8,177.7 602.9,175.4 605,176 C607.1,176.6 608.6,179.7 610.6,181 C612.6,182.3 614.4,183.7 617,184 C619.6,184.3 623.8,182.7 626.5,183 C629.2,183.3 630.6,184.9 633,186 C635.4,187.1 638.1,188.2 640.7,189.7 C643.3,191.2 646.3,193.1 648.7,195 C651.1,196.9 652.4,199.7 655,201 C657.6,202.3 661.1,202.8 664.6,203 C668.1,203.2 671.2,203.2 675.7,202.5 C680.2,201.8 686.6,199.8 691.6,198.5 C696.6,197.2 701.5,195.4 706,194.5 C710.5,193.6 716.5,192.1 718.7,193 C721,193.9 718.7,197.7 719.5,200 C720.3,202.3 721.8,205.4 723.5,207 C725.2,208.6 727.6,209.6 730,209.6 C732.4,209.6 735.2,207.8 738,207 C740.8,206.2 744.2,206.7 747,205 C749.8,203.3 752.7,200.5 755,197 C757.3,193.5 760.4,187.5 761,184 C761.6,180.5 759.7,177.8 758.5,176 C757.3,174.2 753,175.3 753.7,173 C754.5,170.7 760.8,166 763,162 C765.2,158 766.2,152.3 767,149 C767.8,145.7 764.7,143.4 767.5,142 C770.3,140.6 780.1,140.7 784,140.7 C787.9,140.7 785,142.6 791,142 C797,141.4 811.7,138.2 819.7,137 C827.7,135.8 835.6,135.3 838.8,135"/>
<path d="M872,135 C873.3,135.5 877.1,136.5 880,137.8 C882.9,139.2 886.6,141.2 889.6,143.1 C892.6,145 895.9,147.3 897.9,149.1 C899.9,150.9 900.7,151.9 901.5,153.9 C902.3,155.9 901.7,158.6 902.7,161 C903.7,163.4 905.5,166.5 907.5,168.2 C909.5,169.9 912.6,170.7 914.6,171.2 C916.6,171.7 917.2,170.6 919.4,171.2 C921.6,171.8 925,174.5 927.8,174.8 C930.6,175.1 932.9,174.5 936.1,173 C939.3,171.5 943.3,168.1 946.9,165.8 C950.5,163.5 954.4,160.9 957.6,159.3 C960.8,157.7 963.5,157.9 966,156.3 C968.5,154.7 969.7,149.9 972.5,149.7 C975.3,149.5 980.2,153 982.7,155.1 C985.2,157.2 985.9,160 987.5,162.2 C989.1,164.4 990.8,165.7 992.2,168.2 C993.6,170.7 995.4,175.5 996,177"/>
<path d="M382,316 C382.4,317.7 383.7,322.5 384.5,326 C385.3,329.5 386.2,333.2 386.8,337 C387.4,340.8 388.3,343.7 388,348.7 C387.7,353.7 386,362.4 385,367 C384,371.6 382.5,374.5 382,376"/>
<path d="M691.5,582 C694.8,580.6 703.8,575.6 711,573.5 C718.2,571.4 727,571.1 735,569.5 C743,567.9 751.7,565.4 759,563.6 C766.3,561.8 774.3,559.9 779,558.6 C783.7,557.3 784.2,556 787,555.6 C789.8,555.2 790.9,554.8 795.7,556 C800.5,557.2 810.8,562.6 816,563 C821.2,563.4 823.7,559.4 827,558.4 C830.3,557.4 832.7,556.8 836,557 C839.3,557.2 843.7,558.3 847,559.5 C850.3,560.7 853.8,562.2 856,564 C858.2,565.8 859,567 860,570 C861,573 861.7,580 862,582"/>
<path d="M996,492 C993.6,493 986.9,495.5 981.5,498 C976.1,500.5 969.2,503.7 963.6,507 C958,510.3 952.9,513.9 948,518 C943.1,522.1 937.9,527.4 934.5,531.5 C931.1,535.6 929.7,539.4 927.8,542.7 C925.9,546.1 923.6,548.6 923,551.6 C922.4,554.6 923.2,558.2 924.4,560.6 C925.6,563 926.6,564.9 930,566 C933.4,567.1 937.9,567.3 945,567 C952.1,566.7 965.8,564.2 972.5,564 C979.2,563.8 981.1,565.1 985,566 C988.9,566.9 994.2,568.9 996,569.5"/>
<circle cx="639.2" cy="541.7" r="10.5"/>
<circle cx="373.3" cy="572" r="12"/>
<path d="M723.8,520.5 A11,11 0 1 0 708.0,529.7 A10.4,10.4 0 1 0 723.8,520.5 Z"/>
</g>
<!-- roads -->
<g fill="none" stroke="#e892a2" stroke-width="1" stroke-linecap="round" stroke-linejoin="round">
<path d="M451.800,145.200 L438.700,140 L425.500,135.500"/>
<path d="M450,154 L434.600,153.800 L418,155.300 L392,158.500 L382,158.500"/>
<path d="M452.900,161.400 L442.700,165.400 L432.600,169.400 L425.500,175.500 L422.500,180.600 L418,184.600 L398,196 L383.600,207"/>
<path d="M457.400,162.400 L456.900,172.500 L454.900,182.600 L454.400,192 L458.800,195"/>
<path d="M463,160.300 L471,167.400 L477,174.500 L482,180"/>
<path d="M465,150.200 L482,149.700 L505,150.600 L516,145 L523,142.500"/>
<path d="M457.400,147 L455.900,135 M463,145 L465,135 M464,140.700 L473,135"/>
<circle cx="457.500" cy="148.500" r="6"/>
<path d="M443.500,146 A14.500,14.500 0 0 1 471,143 M472,153 A14.500,14.500 0 0 1 446,158"/>
<path d="M451,142 L464,155 M464,142 L451,155 M457.500,140 L457.500,162 M446,148.500 L470,148.500"/>
<path d="M382,145 L390,147 L392,146.500"/>
<path d="M613.700,135 L616.700,142 L625.700,148 L635.600,153.900 L643.600,157.900 L653.500,159.900 L665.500,158.900 L675.400,158.300 L679.400,153.900 L677.400,150 L673,142 L671.400,138 L669.500,135"/>
<path d="M683.400,135 L687.400,139 L693,141.500 L699.300,142 L704,140.500 L707.300,138 L709.300,135"/><path d="M696.300,135 L696.300,141.500"/><path d="M671.400,138 L678,139 L684,137.500"/>
<path d="M693,176 L694.500,186"/>
<path d="M766,135 L769,139" />
</g>
<g fill="none" stroke="#e0708a" stroke-width="1.1" stroke-linecap="round" stroke-linejoin="round">
<path d="M440,141 L450,143.500 L456,146 L461,145 L466,141 L468,135"/>
<path d="M441.500,135 L446,141 L452,146.500 L457,150 L462,153 L466,158 L470,164"/>
<path d="M451,136 L452,142 L453.500,150 L452,157 L450,161"/>
<path d="M459,135 L459.500,142 L459,150 L458,158"/>
<path d="M463,136 L462,142 L461,147"/>
<path d="M447,150 L452,149 L458,150 L464,149 L470,147 L476,143"/>
<path d="M449,144 L455,142 L462,142.500 L467,146 L468,151 L465,156 L459,158.500 L452,157 L448.500,152 L449,144"/>
<path d="M444,147 L438,152 L434.600,153.800"/>
<path d="M468,152 L474,156 L478,160"/>
</g>
<g fill="none" stroke="#f9b29c" stroke-width="1" stroke-linecap="round" stroke-linejoin="round">
<path d="M388.600,135 L389.600,145 L388,157 L386,172.500 L385,192 L384,203 L382.600,218"/>
<path d="M385.800,204 L390,208 L394.600,211.600 L401,215.400"/>
<path d="M469.600,148 L480,140.700 L494.600,139 L482,136"/>
<path d="M505,150.600 L520,148 L527,142"/>
<path d="M425.500,135.500 L411,136"/>
<path d="M659.500,136 L657.500,141 L661,142 L664,139 L668,140"/><path d="M639.600,157.900 L648,159.500 L653.500,159.900"/>
</g>
<!-- labels -->
<g font-family="DejaVu Sans, sans-serif" fill="#222" stroke="#fff" stroke-opacity="0.85" stroke-width="1.600" paint-order="stroke" stroke-linejoin="round">
<text x="435" y="159.600" font-size="11.400">Houston</text>
<text x="492.500" y="142.200" font-size="9.300" fill="#333">Beaumont</text>
<text x="670.500" y="148.800" font-size="9.300" fill="#333">New Orleans</text>
<text x="382" y="360" font-size="9.300" fill="#333" stroke-width="2.500">s</text>
<text x="975" y="535" font-size="7.900" font-style="italic" fill="#7a4c7a" text-anchor="middle" stroke-width="1.200">Pinar del</text>
<text x="975" y="545" font-size="7.900" font-style="italic" fill="#7a4c7a" text-anchor="middle" stroke-width="1.200">Río</text>
</g>

<!-- markers -->
<g fill="#ff0a14" fill-opacity="0.5" transform="translate(0.1,0.5)">
<circle cx="497" cy="301" r="10"/><circle cx="815" cy="291.5" r="10"/><circle cx="537.7" cy="410.5" r="10"/>
</g>
<g fill="#000080" fill-opacity="0.5" transform="translate(0.1,0.5)">
<circle cx="576.8" cy="355.6" r="6"/><circle cx="688" cy="388.8" r="6"/><circle cx="758.9" cy="368.6" r="6"/><circle cx="882.8" cy="356.6" r="6"/><circle cx="864.8" cy="401.6" r="6"/><circle cx="765.9" cy="424" r="6"/><circle cx="494.6" cy="412.5" r="6"/>
</g>
</svg>
<!-- leaflet controls -->
<div class="abs" style="left:392px;top:145px;width:26px;height:53px;border-radius:4px;background:#fff;box-shadow:0 1px 5px rgba(0,0,0,0.65);"></div>
<div class="abs" style="left:392px;top:171px;width:26px;height:1px;background:#ccc;"></div>
<div class="abs" style="left:392px;top:146px;width:26px;height:26px;text-indent:1px;text-align:center;font:bold 18px/26px 'Liberation Mono','DejaVu Sans Mono',monospace;color:#000;">+</div>
<div class="abs" style="left:392px;top:173.500px;width:26px;height:26px;text-indent:1px;text-align:center;font:bold 17px/25px 'Liberation Mono','DejaVu Sans Mono',monospace;color:#000;">&#8722;</div>
<div class="abs" style="left:734px;top:566px;width:262px;height:16px;background:rgba(255,255,255,0.7);"></div>
<div class="abs" style="left:738.500px;top:566px;height:16px;white-space:nowrap;font:11.150px/16px 'Liberation Sans',sans-serif;color:#333;"><span style="color:#0078a8">Leaflet</span> | © <span style="color:#0078a8">OpenStreetMap</span> contributors, <span style="color:#0078a8">CC-BY-SA</span></div>
</body>
</html>
